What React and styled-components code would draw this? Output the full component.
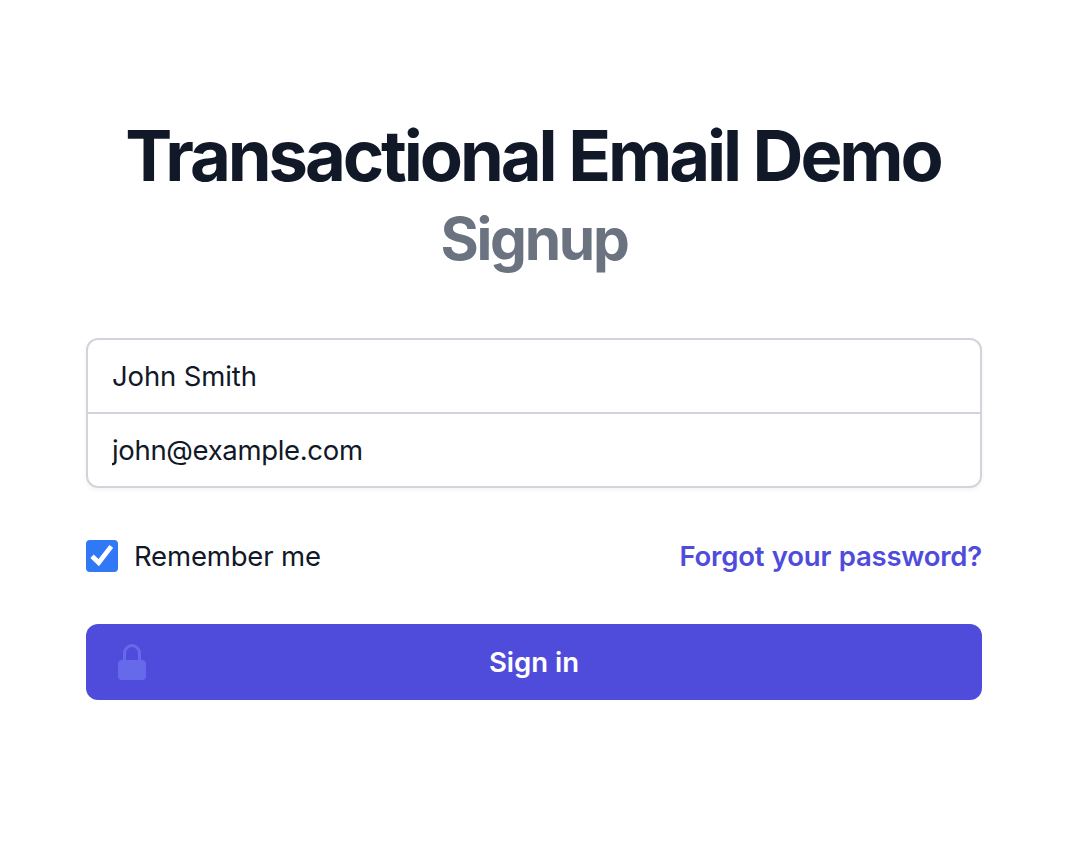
import React from "react";
import styled, { createGlobalStyle } from "styled-components";

const GlobalStyle = createGlobalStyle`
  *, *::before, *::after { box-sizing: border-box; }
  body {
    margin: 0;
    background: #fff;
    color: #111827;
    font-family: Inter, "Liberation Sans", sans-serif;
    font-size: 27.5px;
    font-weight: 430;
    line-height: 40px;
  }
`;

const Page = styled.main`
  width: 896px;
  min-height: 852px;
  margin-left: 86px;
  padding-top: 116px;
`;

const Heading = styled.h1`
  margin: 0 0 0 -2px;
  text-align: center;
  font-size: 70.5px;
  line-height: 80px;
  font-weight: 750;
  letter-spacing: -3.1px;
  white-space: nowrap;
`;

const Subheading = styled.h2`
  margin: 4px 0 0;
  text-align: center;
  color: #6b7280;
  font-size: 58.5px;
  line-height: 78px;
  font-weight: 740;
  letter-spacing: -2.3px;
`;

const Form = styled.form`
  margin-top: 60px;
`;

const FieldGroup = styled.div`
  display: flex;
  flex-direction: column;
  border-radius: 12px;
  box-shadow: 0 2px 4px rgba(0, 0, 0, 0.05);
`;

const Field = styled.input`
  display: block;
  width: 100%;
  height: 76px;
  padding: 16px 24px;
  border: 2px solid #d1d5db;
  border-radius: ${(p) => (p.$last ? "0 0 12px 12px" : "12px 12px 0 0")};
  margin-top: ${(p) => (p.$last ? "-2px" : "0")};
  background: #fff;
  color: #111827;
  font: inherit;
  letter-spacing: ${(p) => (p.$last ? "-0.33px" : "-0.12px")};
  outline: none;
`;

const Options = styled.div`
  display: flex;
  align-items: center;
  justify-content: space-between;
  margin-top: 48px;
`;

const Remember = styled.label`
  display: flex;
  align-items: center;
  gap: 16px;
  letter-spacing: -0.17px;
`;

const CheckMark = styled.span`
  display: flex;
  width: 32px;
  height: 32px;
  border-radius: 4px;
  background: #3078f6;
`;

const ForgotLink = styled.a`
  color: #4f4cdc;
  font-weight: 600;
  letter-spacing: -0.22px;
  word-spacing: 0.9px;
  text-decoration: none;
`;

const SubmitButton = styled.button`
  display: grid;
  grid-template-columns: 40px 1fr 40px;
  align-items: center;
  width: 100%;
  height: 76px;
  margin-top: 48px;
  padding: 0 26px;
  border: 0;
  border-radius: 12px;
  background: #4f4cdc;
  color: #fff;
  font: inherit;
  font-weight: 600;
`;

const LockIcon = styled.svg`
  display: block;
  width: 40px;
  height: 40px;
`;

export default function App() {
  return (
    <>
      <GlobalStyle />
      <Page>
        <Heading>Transactional Email Demo</Heading>
        <Subheading>Signup</Subheading>
        <Form>
          <FieldGroup>
            <Field aria-label="Name" defaultValue="John Smith" />
            <Field $last aria-label="Email" defaultValue="john@example.com" />
          </FieldGroup>
          <Options>
            <Remember>
              <CheckMark>
                <svg width="32" height="32" viewBox="0 0 32 32" fill="none" stroke="#fff" strokeWidth="4.8">
                  <path d="M6 16.2 12.7 22.6 25.3 6.4" strokeLinejoin="miter" />
                </svg>
              </CheckMark>
              Remember me
            </Remember>
            <ForgotLink href="#">Forgot your password?</ForgotLink>
          </Options>
          <SubmitButton type="button">
            <LockIcon viewBox="0 0 40 40" aria-hidden="true">
              <rect x="6" y="18" width="28" height="20" rx="4" fill="#666aea" />
              <path d="M12.5 18v-6.5a7.5 8 0 0 1 15 0V18" fill="none" stroke="#666aea" strokeWidth="3" />
            </LockIcon>
            <span>Sign in</span>
          </SubmitButton>
        </Form>
      </Page>
    </>
  );
}
